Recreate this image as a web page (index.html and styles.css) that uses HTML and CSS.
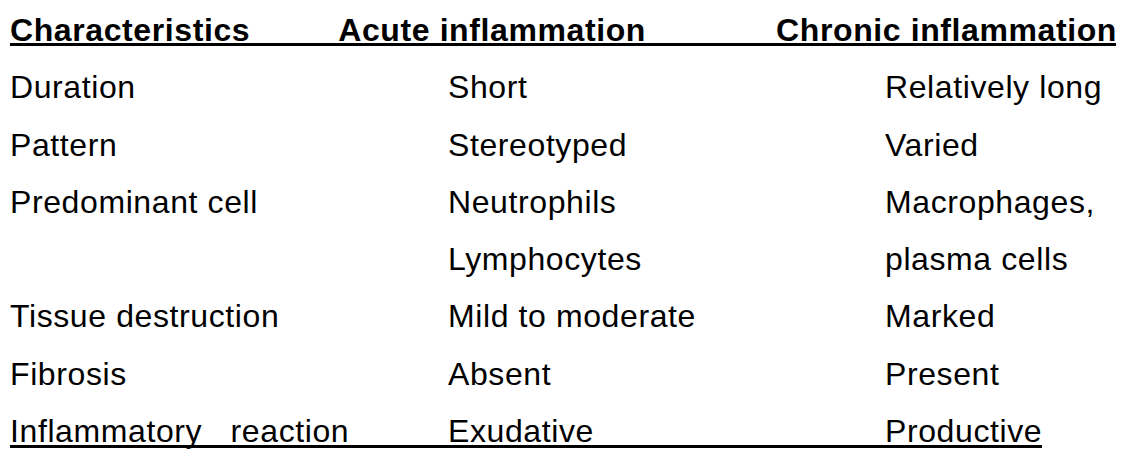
FILE: index.html
```html
<!DOCTYPE html>
<html>
<head>
<meta charset="utf-8">
<link rel="stylesheet" href="styles.css">
</head>
<body>
<div class="page">
  <div class="head">
    <span class="h1">Characteristics</span>
    <span class="h2">Acute inflammation</span>
    <span class="h3">Chronic inflammation</span>
  </div>
  <div class="rows">
    <div class="row"><span>Duration</span><span>Short</span><span>Relatively long</span></div>
    <div class="row"><span>Pattern</span><span>Stereotyped</span><span>Varied</span></div>
    <div class="row"><span>Predominant cell</span><span>Neutrophils</span><span>Macrophages,</span></div>
    <div class="row"><span></span><span>Lymphocytes</span><span>plasma cells</span></div>
    <div class="row"><span>Tissue destruction</span><span>Mild to moderate</span><span>Marked</span></div>
    <div class="row"><span>Fibrosis</span><span>Absent</span><span>Present</span></div>
    <div class="row last"><span>Inflammatory&nbsp;&nbsp;&nbsp;reaction</span><span>Exudative</span><span>Productive</span></div>
  </div>
</div>
</body>
</html>
```

FILE: styles.css
```css
html, body {
  margin: 0;
  padding: 0;
  background: #ffffff;
}
.page {
  width: 1121px;
  height: 460px;
  font-family: "Liberation Sans", Arial, sans-serif;
  font-size: 32px;
  letter-spacing: 0.6px;
  color: #000;
  padding-left: 10px;
  box-sizing: border-box;
  overflow: hidden;
}
.head {
  display: flex;
  width: 1106px;
  height: 29px;
  line-height: 32px;
  padding-top: 14px;
  font-weight: bold;
  border-bottom: 3px solid #000;
  white-space: nowrap;
}
.h2 { margin-left: 88px; }
.h3 { margin-left: auto; margin-right: -1px; }
.rows {
  margin-top: 13.3px;
}
.row {
  display: grid;
  grid-template-columns: 438px 437px max-content;
  width: max-content;
  height: 57.3px;
  line-height: 57.3px;
  white-space: nowrap;
}
.row.last {
  height: 42px;
  border-bottom: 3px solid #000;
}
```
